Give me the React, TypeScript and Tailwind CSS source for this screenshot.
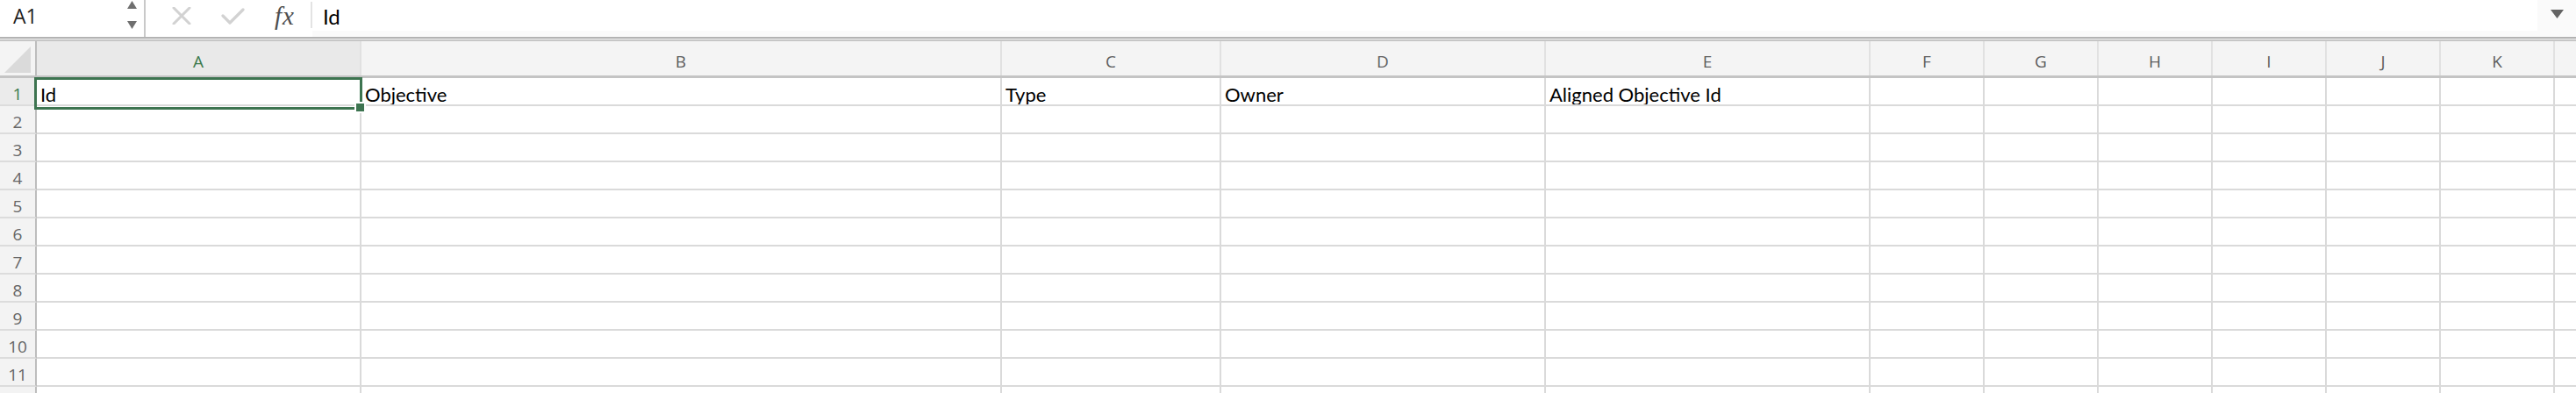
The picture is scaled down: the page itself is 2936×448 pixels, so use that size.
import React from 'react';

const columns = [
    { name: 'A', width: 'w-[370px]', value: 'Id' },
    { name: 'B', width: 'w-[730px]', value: 'Objective' },
    { name: 'C', width: 'w-[250px]', value: 'Type' },
    { name: 'D', width: 'w-[370px]', value: 'Owner' },
    { name: 'E', width: 'w-[370px]', value: 'Aligned Objective Id' },
    { name: 'F', width: 'w-[130px]', value: '' },
    { name: 'G', width: 'w-[130px]', value: '' },
    { name: 'H', width: 'w-[130px]', value: '' },
    { name: 'I', width: 'w-[130px]', value: '' },
    { name: 'J', width: 'w-[130px]', value: '' },
    { name: 'K', width: 'w-[130px]', value: '' },
];

const rows = [1, 2, 3, 4, 5, 6, 7, 8, 9, 10, 11];

const FormulaBar = () => (
    <div className="flex h-[42px] bg-[#fafafa]">
        {/* Name box */}
        <div className="w-[164px] flex items-center bg-white">
            <span className="ml-[15px] text-[23px] text-[#1f1f1f] font-['Open_Sans',sans-serif] leading-none pb-[6px]">A1</span>
            <div className="ml-auto mr-[8px] flex flex-col justify-between h-[32px] self-start mt-[1px]">
                <svg width="11" height="9" viewBox="0 0 11 9">
                    <path d="M5.5 0 L11 9 L0 9 Z" fill="#6f6f6f" />
                </svg>
                <svg width="11" height="9" viewBox="0 0 11 9">
                    <path d="M0 0 L11 0 L5.5 9 Z" fill="#6f6f6f" />
                </svg>
            </div>
        </div>
        <div className="w-[2px] bg-[#c9c9c9]" />

        {/* Cancel / confirm / fx */}
        <div className="w-[190px] flex items-center bg-white">
            <svg className="ml-[30px] mb-[6px]" width="22" height="20" viewBox="0 0 22 20">
                <path d="M2 1 L20 19 M20 1 L2 19" stroke="#d2d2d2" strokeWidth="3" strokeLinecap="round" />
            </svg>
            <svg className="ml-[34px] mb-[6px]" width="27" height="19" viewBox="0 0 27 19">
                <path d="M2 9 L10 17 L25 2" stroke="#d2d2d2" strokeWidth="3.2" fill="none" strokeLinecap="round" strokeLinejoin="round" />
            </svg>
            <span className="ml-[34px] mb-[6px] text-[29px] italic text-[#4e4e4e] font-['Liberation_Serif',serif] leading-none tracking-[1px]">fx</span>
            <div className="ml-auto w-[2px] h-[30px] self-start mt-[2px] bg-[#e3e3e3]" />
        </div>

        <div className="flex-1 h-[35px] bg-white flex items-center pl-[12px]">
            <span className="text-[24px] text-black font-['Lato',sans-serif] leading-none pt-[2px]">Id</span>
        </div>
        <div className="w-[44px] flex justify-center pt-[11px]">
            <svg width="15" height="10" viewBox="0 0 15 10">
                <path d="M0 0 L15 0 L7.5 10 Z" fill="#646464" />
            </svg>
        </div>
    </div>
);

export default function App() {
    return (
        <div className="relative w-[2936px] h-[448px] overflow-hidden bg-white">
            <FormulaBar />

            {/* Double separator under the formula bar */}
            <div className="h-[5px] border-t-2 border-b-2 border-t-[#b3b3b3] border-b-[#c6c6c6] bg-[#eeeeee]" />

            {/* Column headers */}
            <div className="flex h-[42px] border-b-[3px] border-[#c4c4c4] bg-[#f4f4f4] font-['Open_Sans',sans-serif] text-[19px]">
                <div className="w-[42px] shrink-0 border-r-2 border-[#bdbdbd] flex items-end justify-end pr-[5px] pb-[3px]">
                    <svg width="30" height="30" viewBox="0 0 30 30">
                        <path d="M30 0 L30 30 L0 30 Z" fill="#dadada" />
                    </svg>
                </div>
                {columns.map((col) => (
                    <div
                        key={col.name}
                        className={`${col.width} shrink-0 border-r-2 border-[#e1e1e1] flex items-center justify-center pt-[8px] ${
                            col.name === 'A' ? 'bg-[#e9e9e9] text-[#3b7a4d]' : 'text-[#5e5e5e]'
                        }`}
                    >
                        {col.name}
                    </div>
                ))}
                <div className="flex-1" />
            </div>

            {/* Rows */}
            {rows.map((row) => (
                <div key={row} className="flex h-[32px]">
                    <div
                        className={`w-[42px] shrink-0 border-r-2 border-b-2 border-r-[#bdbdbd] border-b-[#dcdcdc] flex items-center justify-center pt-[6px] font-['Open_Sans',sans-serif] text-[19px] ${
                            row === 1 ? 'bg-[#ebebeb] text-[#3b7a4d]' : 'bg-[#f3f3f3] text-[#666666]'
                        }`}
                    >
                        {row}
                    </div>
                    {columns.map((col) => (
                        <div
                            key={col.name}
                            className={`${col.width} shrink-0 border-r-2 border-b-2 border-[#dadada] flex items-center pl-[4px] pt-[7px] font-['Lato',sans-serif] text-[22px] text-black whitespace-nowrap overflow-hidden`}
                        >
                            {row === 1 ? col.value : ''}
                        </div>
                    ))}
                    <div className="flex-1 border-b-2 border-[#dadada]" />
                </div>
            ))}

            {/* Top of row 12, cut by the window */}
            <div className="flex h-[8px]">
                <div className="w-[42px] shrink-0 border-r-2 border-[#bdbdbd] bg-[#f3f3f3]" />
                {columns.map((col) => (
                    <div key={col.name} className={`${col.width} shrink-0 border-r-2 border-[#dadada]`} />
                ))}
            </div>

            {/* Active cell selection */}
            <div className="absolute left-[39px] top-[88px] w-[374px] h-[37px] border-[3px] border-[#3d7450] pointer-events-none" />
            <div className="absolute left-[404px] top-[116px] w-[13px] h-[13px] bg-[#3d7450] border-2 border-white" />
        </div>
    );
}
